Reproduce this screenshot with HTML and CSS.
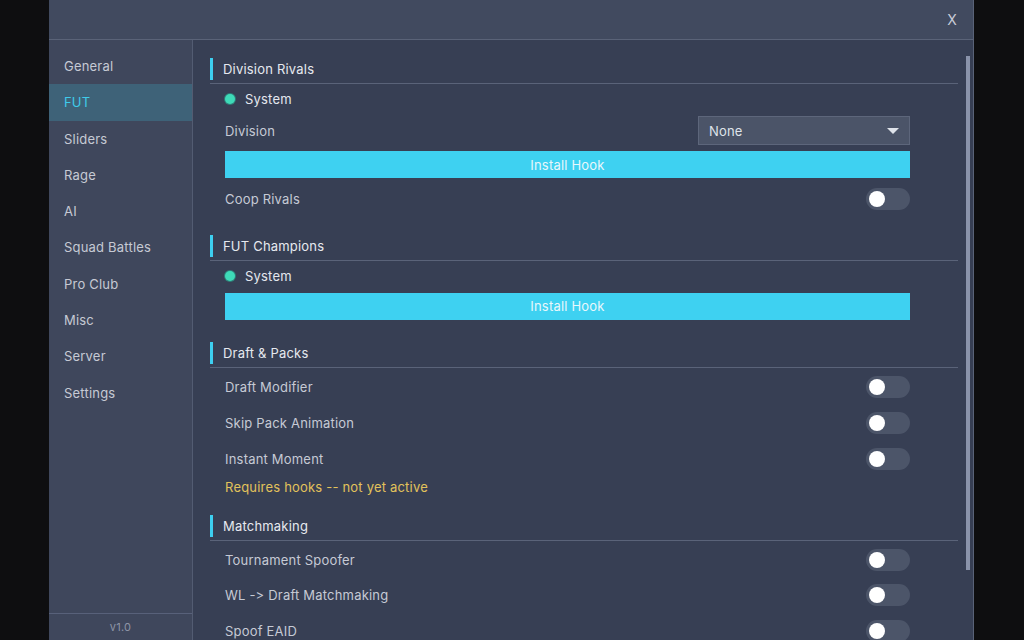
FILE: index.html
```html
<!DOCTYPE html>
<html lang="en">
  <head>
    <meta charset="UTF-8" />
    <meta name="viewport" content="width=device-width, initial-scale=1.0" />
    <title>FUT - Settings</title>
    <link rel="stylesheet" href="styles.css">
  </head>
  <body>
    <div class="window">
      <div class="titlebar">
        <span class="close">X</span>
      </div>
      <div class="main">
        <div class="sidebar">
          <ul class="nav">
            <li>General</li>
            <li class="active">FUT</li>
            <li>Sliders</li>
            <li>Rage</li>
            <li>AI</li>
            <li>Squad Battles</li>
            <li>Pro Club</li>
            <li>Misc</li>
            <li>Server</li>
            <li>Settings</li>
          </ul>
          <div class="version">v1.0</div>
        </div>

        <div class="content">
          <!-- Division Rivals -->
          <div class="section">
            <div class="section-head"><span class="section-title">Division Rivals</span></div>
            <div class="row radio-row">
              <span class="radio"></span>
              <span class="radio-label">System</span>
            </div>
            <div class="row combo-row">
              <span class="label">Division</span>
              <div class="combo">
                <span>None</span>
                <span class="caret"></span>
              </div>
            </div>
            <button class="hook-button">Install Hook</button>
            <div class="row toggle-row">
              <span class="label">Coop Rivals</span>
              <span class="toggle"></span>
            </div>
          </div>

          <!-- FUT Champions -->
          <div class="section">
            <div class="section-head"><span class="section-title">FUT Champions</span></div>
            <div class="row radio-row">
              <span class="radio"></span>
              <span class="radio-label">System</span>
            </div>
            <button class="hook-button">Install Hook</button>
          </div>

          <!-- Draft & Packs -->
          <div class="section draft">
            <div class="section-head"><span class="section-title">Draft &amp; Packs</span></div>
            <div class="row toggle-row">
              <span class="label">Draft Modifier</span>
              <span class="toggle"></span>
            </div>
            <div class="row toggle-row">
              <span class="label">Skip Pack Animation</span>
              <span class="toggle"></span>
            </div>
            <div class="row toggle-row">
              <span class="label">Instant Moment</span>
              <span class="toggle"></span>
            </div>
            <div class="row note">Requires hooks -- not yet active</div>
          </div>

          <!-- Matchmaking -->
          <div class="section">
            <div class="section-head"><span class="section-title">Matchmaking</span></div>
            <div class="row toggle-row">
              <span class="label">Tournament Spoofer</span>
              <span class="toggle"></span>
            </div>
            <div class="row toggle-row">
              <span class="label">WL -&gt; Draft Matchmaking</span>
              <span class="toggle"></span>
            </div>
            <div class="row toggle-row">
              <span class="label">Spoof EAID</span>
              <span class="toggle"></span>
            </div>
          </div>

          <div class="scroll-thumb"></div>
        </div>
      </div>
    </div>
  </body>
</html>
```

FILE: styles.css
```css
html,
body {
  margin: 0;
  padding: 0;
  height: 100%;
}
body {
  background-color: #0e0e10;
  font-family: "Inter", "Noto Sans", sans-serif;
  font-size: 13px;
  letter-spacing: 0.2px;
  color: #c6cad5;
  overflow: hidden;
}
.window {
  margin-left: 49px;
  width: 924px;
  height: 100%;
  display: flex;
  flex-direction: column;
  border-right: 1px solid #5a6378;
}
.titlebar {
  height: 39px;
  flex-shrink: 0;
  background-color: #414a5f;
  border-bottom: 1px solid #5a6378;
  display: flex;
  align-items: center;
  justify-content: flex-end;
  padding-right: 16px;
}
.titlebar .close {
  color: #c8ccd8;
  font-size: 14px;
}
.main {
  flex: 1;
  display: flex;
  min-height: 0;
}
/* Left navigation */
.sidebar {
  width: 143px;
  flex-shrink: 0;
  background-color: #3f475c;
  border-right: 1px solid #535c72;
  display: flex;
  flex-direction: column;
}
.nav {
  list-style: none;
  margin: 0;
  padding: 8px 0 0 0;
  flex: 1;
}
.nav li {
  height: 36.3px;
  line-height: 36.3px;
  padding-left: 15px;
  color: #c6cad4;
}
.nav li.active {
  background-color: #3e6278;
  color: #3fcbea;
}
.version {
  height: 26px;
  line-height: 26px;
  border-top: 1px solid #58617a;
  text-align: center;
  font-size: 11px;
  color: #8e95a6;
}
/* Settings panel */
.content {
  position: relative;
  flex: 1;
  overflow: hidden;
  background-color: #373f54;
  padding: 18px 15px 0 17px;
}
.section {
  display: flex;
  flex-direction: column;
  gap: 6px;
  margin-bottom: 21px;
}
.section.draft {
  padding-top: 1px;
  gap: 6.5px;
}
.section-head {
  border-bottom: 1px solid #5a6379;
  padding-bottom: 3px;
  margin-bottom: -2px;
}
.section-title {
  display: block;
  height: 22px;
  line-height: 22px;
  border-left: 3px solid #3dcff0;
  padding-left: 10px;
  color: #e6e9ef;
}
.row {
  display: flex;
  align-items: center;
  justify-content: space-between;
  margin: 0 48px 0 15px;
}
.radio-row {
  justify-content: flex-start;
  height: 22px;
}
.radio {
  width: 10px;
  height: 10px;
  border-radius: 50%;
  background-color: #3edab8;
  box-shadow: 0 0 0 1px #2f7f79;
  margin-right: 10px;
}
.radio-label {
  color: #e4e7ee;
}
.combo-row {
  height: 29px;
}
.combo {
  width: 190px;
  height: 27px;
  background-color: #4b5468;
  border: 1px solid #5d667b;
  display: flex;
  align-items: center;
  justify-content: space-between;
  padding: 0 10px;
  color: #dfe3ea;
}
.caret {
  width: 0;
  height: 0;
  border-left: 6px solid transparent;
  border-right: 6px solid transparent;
  border-top: 6px solid #dfe3ea;
}
.hook-button {
  margin: 0 48px 0 15px;
  height: 27px;
  border: none;
  background-color: #3ed1f1;
  color: #e8f7fc;
  font-family: inherit;
  font-size: 13px;
  letter-spacing: 0.2px;
  padding: 0;
}
.toggle-row {
  height: 29.5px;
}
.toggle {
  position: relative;
  width: 44px;
  height: 22px;
  border-radius: 11px;
  background-color: #4c5569;
}
.toggle::after {
  content: "";
  position: absolute;
  left: 3px;
  top: 3px;
  width: 16px;
  height: 16px;
  border-radius: 50%;
  background-color: #ffffff;
}
.note {
  height: 14px;
  color: #e2c25b;
}
.scroll-thumb {
  position: absolute;
  top: 16px;
  right: 3px;
  width: 4px;
  height: 514px;
  background-color: #8a93aa;
}
```
